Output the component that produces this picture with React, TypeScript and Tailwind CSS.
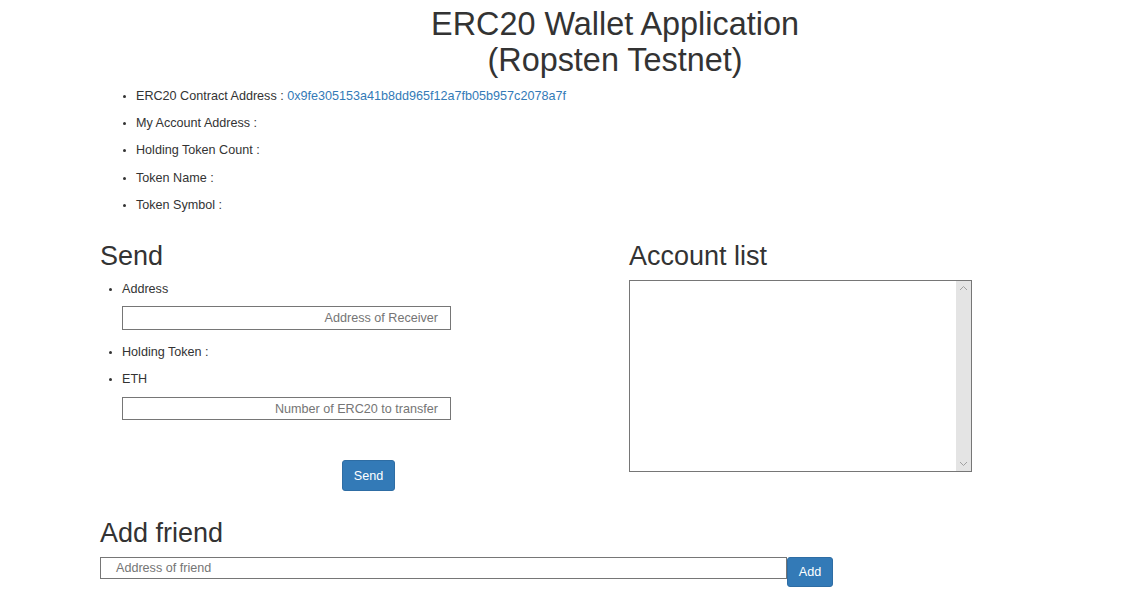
import React from "react";

const font = { fontFamily: '"Liberation Sans", Arial, sans-serif' };

export default function App() {
  return (
    <div
      className="min-h-[601px] w-[1135px] bg-white pl-[100px] text-[#333333] text-[12.6px] leading-[18px]"
      style={font}
    >
      <h1 className="w-[1030px] pt-[7px] text-center text-[32.4px] leading-[35.64px] font-normal text-[#333333]">
        ERC20 Wallet Application
        <br />
        (Ropsten Testnet)
      </h1>

      <ul className="mt-[8.3px] list-disc pl-[36px] marker:text-[10px]">
        <li className="mb-[9.25px]">
          ERC20 Contract Address :{" "}
          <span className="text-[#337ab7]">0x9fe305153a41b8dd965f12a7fb05b957c2078a7f</span>
        </li>
        <li className="mb-[9.25px]">My Account Address :</li>
        <li className="mb-[9.6px]">Holding Token Count :</li>
        <li className="mb-[9.25px]">Token Name :</li>
        <li>Token Symbol :</li>
      </ul>

      <div className="mt-[28px] flex items-start">
        <div className="w-[529px]">
          <h2 className="text-[27px] leading-[29.7px] font-normal">Send</h2>
          <ul className="mt-[8.5px] list-disc pl-[22px] marker:text-[10px]">
            <li>Address</li>
          </ul>
          <div className="mt-[8px] ml-[22px] flex h-[24px] w-[329px] items-center justify-end border border-[#767676] pr-[12px] text-[12.6px] text-[#757575]">
            Address of Receiver
          </div>
          <ul className="mt-[12.6px] list-disc pl-[22px] marker:text-[10px]">
            <li className="mb-[9.5px]">Holding Token :</li>
            <li>ETH</li>
          </ul>
          <div className="mt-[9px] ml-[22px] flex h-[23px] w-[329px] items-center justify-end border border-[#767676] pr-[12px] text-[12.6px] text-[#757575]">
            Number of ERC20 to transfer
          </div>
          <div className="mt-[40px] ml-[242px] flex h-[31px] w-[53px] items-center justify-center rounded-[3px] border border-[#2e6da4] bg-[#337ab7] text-[12.6px] text-white">
            Send
          </div>
        </div>

        <div>
          <h2 className="text-[27px] leading-[29.7px] font-normal">Account list</h2>
          <div className="mt-[8px] flex h-[192px] w-[343px] border border-[#767676]">
            <div className="flex-1" />
            <div className="flex w-[15px] flex-col items-center justify-between bg-[#e4e4e4] py-[4px]">
              <svg width="9" height="6" viewBox="0 0 9 6">
                <path d="M1 5 L4.5 1.5 L8 5" fill="none" stroke="#a0a0a0" strokeWidth="1" />
              </svg>
              <svg width="9" height="6" viewBox="0 0 9 6">
                <path d="M1 1 L4.5 4.5 L8 1" fill="none" stroke="#a0a0a0" strokeWidth="1" />
              </svg>
            </div>
          </div>
        </div>
      </div>

      <h2 className="mt-[27.5px] text-[27px] leading-[29.7px] font-normal">Add friend</h2>
      <div className="mt-[8.5px] flex items-start">
        <div className="flex h-[22px] w-[687px] items-center border border-[#767676] pl-[15px] text-[12.6px] text-[#757575]">
          Address of friend
        </div>
        <div className="flex h-[30px] w-[46px] items-center justify-center rounded-[3px] border border-[#2e6da4] bg-[#337ab7] text-[12.6px] text-white">
          Add
        </div>
      </div>
    </div>
  );
}
